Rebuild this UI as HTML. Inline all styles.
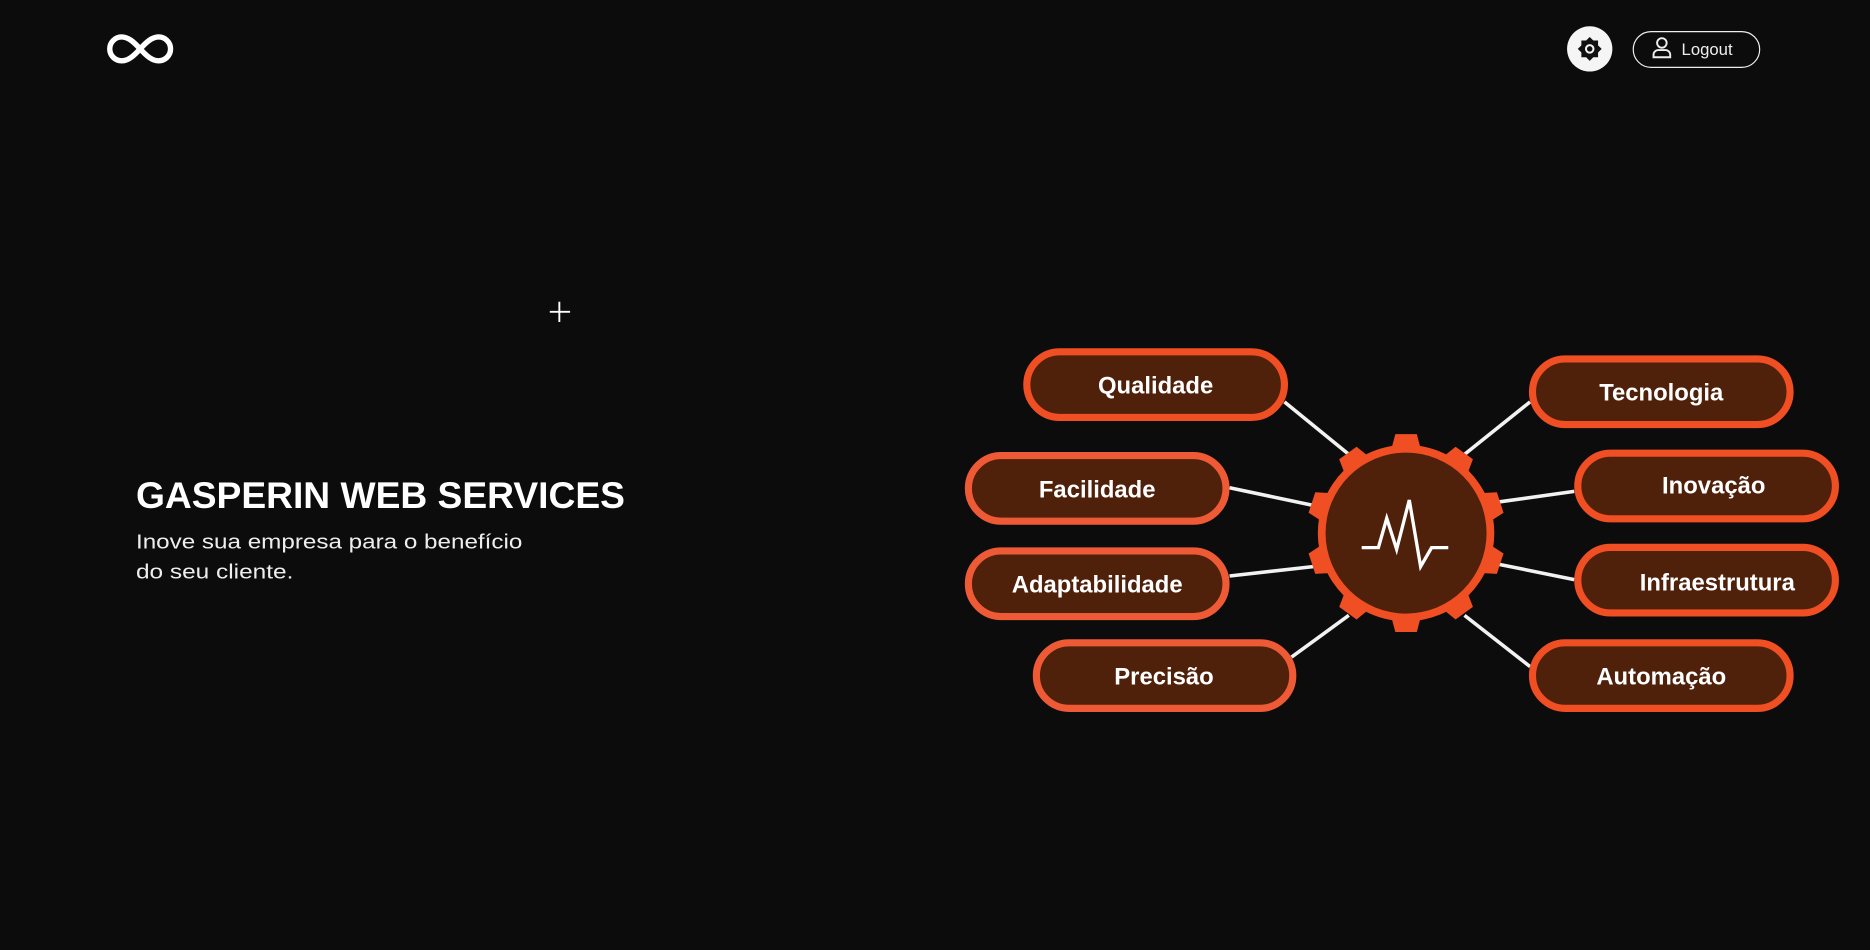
<!DOCTYPE html>
<html><head><meta charset="utf-8"><style>
html,body{margin:0;padding:0;background:#0c0c0c;width:1870px;height:950px;overflow:hidden}
svg{display:block}
</style></head><body>
<svg width="1870" height="950" viewBox="0 0 1568 796.6" xmlns="http://www.w3.org/2000/svg" font-family="Liberation Sans, sans-serif">
<rect width="1568" height="797" fill="#0c0c0c"/>
<!-- logo -->
<path d="M117.5 41 C112 35 107.5 31 102 31 A10 10 0 0 0 102 51 C107.5 51 112 47 117.5 41 C123 35 127.5 31 133 31 A10 10 0 0 1 133 51 C127.5 51 123 47 117.5 41 Z" fill="none" stroke="#fff" stroke-width="4.5" stroke-linejoin="round"/>
<!-- gear button -->
<circle cx="1333" cy="41" r="19" fill="#f5f5f5"/>
<g transform="translate(1333,41)" fill="#111">
<polygon points="0,-10 3,-7 7,-7 7,-3 10,0 7,3 7,7 3,7 0,10 -3,7 -7,7 -7,3 -10,0 -7,-3 -7,-7 -3,-7"/>
<circle r="4" fill="#f5f5f5"/><circle r="2.3" fill="#111"/>
</g>
<!-- logout -->
<rect x="1369.5" y="26.5" width="106" height="30" rx="15" fill="none" stroke="#eee" stroke-width="1"/>
<circle cx="1393.5" cy="36" r="4" fill="none" stroke="#eee" stroke-width="1.6"/>
<path d="M1386.5 48 v-2 a4 4 0 0 1 4 -4 h6 a4 4 0 0 1 4 4 v2 z" fill="none" stroke="#eee" stroke-width="1.6"/>
<text x="1410" y="46" font-size="14" fill="#eee">Logout</text>
<!-- plus -->
<path d="M469 253 v17 M461 261.5 h17" stroke="#fff" stroke-width="1.6"/>
<!-- title -->
<text x="114" y="426" font-size="31" font-weight="bold" fill="#fff" textLength="410" lengthAdjust="spacingAndGlyphs">GASPERIN WEB SERVICES</text>
<text x="114" y="460" font-size="17" fill="#eee" textLength="324" lengthAdjust="spacingAndGlyphs">Inove sua empresa para o benefício</text>
<text x="114" y="485" font-size="17" fill="#eee" textLength="132" lengthAdjust="spacingAndGlyphs">do seu cliente.</text>
<!-- lines -->
<g stroke="#f2f2f2" stroke-width="3">
<line x1="1077" y1="337" x2="1131" y2="381"/>
<line x1="1031" y1="409" x2="1102" y2="424"/>
<line x1="1031" y1="483" x2="1102" y2="475"/>
<line x1="1083" y1="551" x2="1131" y2="516"/>
<line x1="1283" y1="337" x2="1228" y2="381"/>
<line x1="1320" y1="412" x2="1256" y2="421"/>
<line x1="1320" y1="486" x2="1256" y2="473"/>
<line x1="1283" y1="559" x2="1228" y2="516"/>
</g>
<!-- pills -->
<g fill="#4f200a" stroke="#f04e23" stroke-width="6">
<rect x="861" y="295" width="216" height="55" rx="27.5"/>
<rect x="812" y="382" width="216" height="55" rx="27.5" stroke="#ee5a36"/>
<rect x="812" y="462" width="216" height="55" rx="27.5" stroke="#ee5a36"/>
<rect x="869" y="539" width="215" height="55" rx="27.5" stroke="#ee5a36"/>
<rect x="1285" y="301" width="216" height="55" rx="27.5"/>
<rect x="1323" y="380" width="216" height="55" rx="27.5"/>
<rect x="1323" y="459" width="216" height="55" rx="27.5"/>
<rect x="1285" y="539" width="216" height="55" rx="27.5"/>
</g>
<g fill="#fff" font-size="20" font-weight="bold" text-anchor="middle">
<text x="969" y="330">Qualidade</text>
<text x="920" y="417">Facilidade</text>
<text x="920" y="497">Adaptabilidade</text>
<text x="976" y="574">Precisão</text>
<text x="1393" y="336">Tecnologia</text>
<text x="1437" y="414">Inovação</text>
<text x="1440" y="495">Infraestrutura</text>
<text x="1393" y="574">Automação</text>
</g>
<!-- gear -->
<g transform="translate(1179,447)">
<g fill="#f04e23">
<circle r="74"/>
<polygon id="t" points="-9,-83 9,-83 13,-68 -13,-68"/>
<use href="#t" transform="rotate(36)"/><use href="#t" transform="rotate(72)"/>
<use href="#t" transform="rotate(108)"/><use href="#t" transform="rotate(144)"/>
<use href="#t" transform="rotate(180)"/><use href="#t" transform="rotate(216)"/>
<use href="#t" transform="rotate(252)"/><use href="#t" transform="rotate(288)"/>
<use href="#t" transform="rotate(324)"/>
</g>
<circle r="67.5" fill="#4f200a"/>
</g>
<polyline points="1141.8,459.2 1155.8,459.2 1162.8,434.6 1171.1,460.6 1181.7,419.3 1191.2,475.1 1200.4,459.2 1214.4,459.2" fill="none" stroke="#fff" stroke-width="2.8" stroke-linejoin="miter"/>
</svg>
</body></html>
